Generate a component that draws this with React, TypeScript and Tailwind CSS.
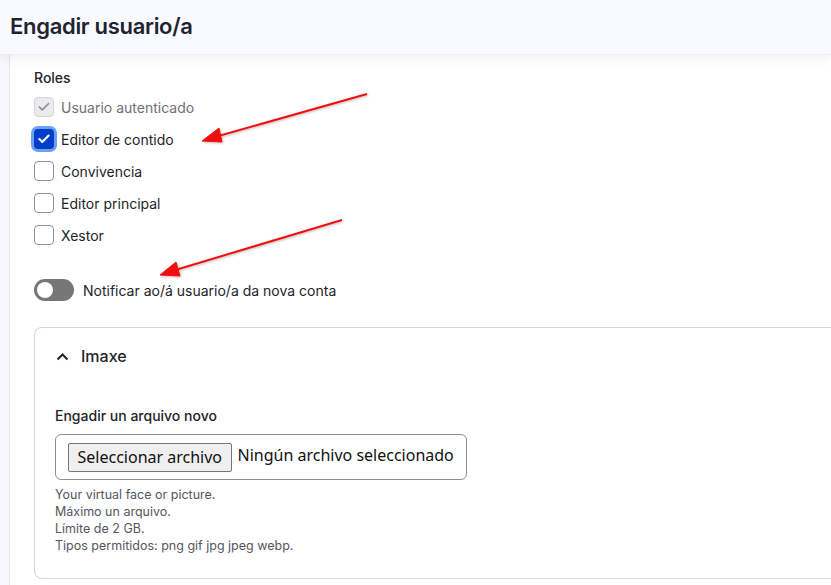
import { Check } from 'lucide-react'

const roles = [
  { label: 'Usuario autenticado', state: 'disabled' },
  { label: 'Editor de contido', state: 'checked' },
  { label: 'Convivencia', state: 'off' },
  { label: 'Editor principal', state: 'off' },
  { label: 'Xestor', state: 'off' },
]

function Box({ state }: { state: string }) {
  if (state === 'disabled') {
    return (
      <span className="w-5 h-5 rounded-[4px] border border-[#d3d4d9] bg-[#ebebed] flex items-center justify-center">
        <Check size={14} strokeWidth={3} className="text-[#8e8f96]" />
      </span>
    )
  }
  if (state === 'checked') {
    return (
      <span className="w-5 h-5 rounded-[4px] bg-[#003ecc] flex items-center justify-center ring-[3px] ring-[#6ba0f5]">
        <Check size={14} strokeWidth={3.5} className="text-white" />
      </span>
    )
  }
  return <span className="w-5 h-5 rounded-[4px] border border-[#8e929c] bg-white" />
}

export default function App() {
  return (
    <div className="relative h-[585px] w-[831px] overflow-hidden bg-[#f7f8fc] text-[#232429]" style={{ fontFamily: 'Inter, "Noto Sans", sans-serif' }}>
      <header className="relative z-10 h-[55px] bg-[#f9faff] border-b border-[#eceef3] shadow-[0_4px_10px_rgba(0,0,0,0.06)] flex items-center pl-[10px]">
        <h1 className="text-[22px] font-semibold tracking-[-0.3px] text-[#222330] -mt-[1px]">Engadir usuario/a</h1>
      </header>

      <div className="pl-[9px] h-[530px]">
        <div className="h-full bg-white border-l border-[#e6e7ec] pl-[24px] pt-[14px]">
          <div className="text-[14px] font-medium leading-[18px]">Roles</div>
          <div className="mt-[4px] flex flex-col">
            {roles.map(r => (
              <label key={r.label} className="h-8 flex items-center gap-[7px]">
                <Box state={r.state} />
                <span className={`text-[14px] ${r.state === 'disabled' ? 'text-[#6e6f78]' : 'text-[#232429]'}`}>{r.label}</span>
              </label>
            ))}
          </div>

          <div className="mt-[28px] flex items-center gap-[9px]">
            <span className="w-10 h-[22px] rounded-full bg-[#767676] p-[3px] flex items-center">
              <span className="w-4 h-4 rounded-full bg-white" />
            </span>
            <span className="text-[14px]">Notificar ao/á usuario/a da nova conta</span>
          </div>

          <div className="mt-[26px] border border-[#d6d7db] border-r-0 rounded-l-[8px] h-[252px]">
            <div className="h-[56px] flex items-center pl-[21px] gap-[12px]">
              <svg width="13" height="9" viewBox="0 0 13 9" fill="none">
                <path d="M1.5 7.5 L6.5 2.5 L11.5 7.5" stroke="#232429" strokeWidth="2" />
              </svg>
              <span className="text-[16px] font-medium">Imaxe</span>
            </div>
            <div className="pl-[20px] pt-[23px]">
              <div className="text-[14px] font-medium leading-[18px]">Engadir un arquivo novo</div>
              <div className="mt-[9px] w-[412px] h-[46px] border border-[#8e8f96] rounded-[6px] flex items-center pl-[12px] gap-[6px]">
                <span className="h-[29px] px-[8.5px] flex items-center bg-[#efefef] border border-[#767676] rounded-[2px] text-[16px] text-[#111]" style={{ fontFamily: '"Noto Sans", Inter, sans-serif' }}>Seleccionar archivo</span>
                <span className="text-[16px] text-[#111] -mt-[4px]" style={{ fontFamily: '"Noto Sans", Inter, sans-serif' }}>Ningún archivo seleccionado</span>
              </div>
              <div className="mt-[6px] text-[12.5px] leading-[17px] text-[#55565e]">
                <div>Your virtual face or picture.</div>
                <div>Máximo un arquivo.</div>
                <div>Límite de 2 GB.</div>
                <div>Tipos permitidos: png gif jpg jpeg webp.</div>
              </div>
            </div>
          </div>
        </div>
      </div>

      <svg className="absolute inset-0 pointer-events-none z-20" width="831" height="585">
        <defs>
          <filter id="sh" x="-10%" y="-10%" width="120%" height="120%">
            <feDropShadow dx="1" dy="1" stdDeviation="1" floodColor="#000" floodOpacity="0.25" />
          </filter>
        </defs>
        <g filter="url(#sh)" fill="#f01010" stroke="#f01010">
          <line x1="367" y1="94" x2="215" y2="137" strokeWidth="2" />
          <polygon points="202,141 219,128 222,142" strokeWidth="1" />
          <line x1="342" y1="220" x2="172" y2="271" strokeWidth="2" />
          <polygon points="160,275 176,262 180,276" strokeWidth="1" />
        </g>
      </svg>
    </div>
  )
}
